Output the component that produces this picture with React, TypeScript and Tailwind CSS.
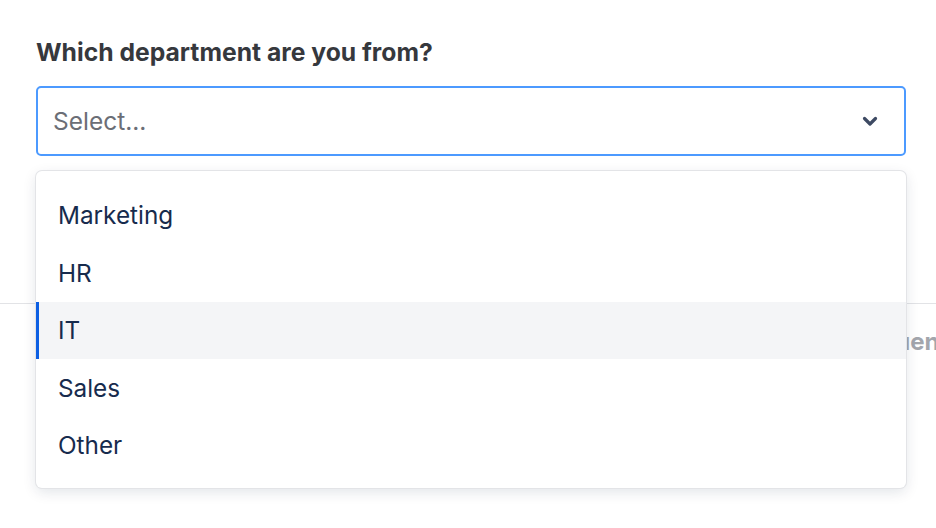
import React from 'react';

const departments = ['Marketing', 'HR', 'IT', 'Sales', 'Other'];

function ChevronDown() {
    return (
        <svg width="24" height="24" viewBox="0 0 24 24" fill="none" className="text-[#3d4a63]">
            <path d="M6.5 9.5l5.5 5.5 5.5-5.5" stroke="currentColor" strokeWidth="3.2" strokeLinecap="round" strokeLinejoin="round" />
        </svg>
    );
}

export default function App() {
    const active = 'IT';

    return (
        <div className="relative w-[936px] h-[528px] overflow-hidden bg-white font-['Inter',sans-serif]">
            <div className="px-[36px] pt-[37px]">
                <label className="block text-[24.7px] leading-[31px] font-bold text-[#36383d]">
                    Which department are you from?
                </label>

                <div className="relative mt-[18px]">
                    {/* Trigger */}
                    <button className="flex h-[70px] w-[870px] items-center justify-between rounded-[5px] border-2 border-[#4c9aff] bg-white pl-[15px] pr-[22px] text-left">
                        <span className="text-[24.5px] text-[#6b6e76]">Select...</span>
                        <ChevronDown />
                    </button>

                    {/* Open menu */}
                    <div className="absolute left-0 top-[85px] z-10 w-[870px] rounded-[6px] bg-white pt-[16px] pb-[14px] shadow-[0_0_0_1px_#e3e4e7,0_4px_14px_rgba(9,30,66,0.12)]">
                        {departments.map((d) => (
                            <div
                                key={d}
                                className={
                                    d === active
                                        ? 'flex h-[57.4px] items-center border-l-[3px] border-[#0c5fe3] bg-[#f4f5f7] pl-[19px] text-[24.3px] text-[#172b4d]'
                                        : 'flex h-[57.4px] items-center pl-[22px] text-[24.3px] text-[#172b4d]'
                                }
                            >
                                {d}
                            </div>
                        ))}
                    </div>
                </div>
            </div>

            {/* Page content behind the menu */}
            <div className="mt-[147px] border-t border-[#e2e3e6]">
                <div className="whitespace-nowrap pl-[843px] pt-[20px] text-[24px] font-bold text-[#a3a6ad]">
                    Frequency
                </div>
            </div>
        </div>
    );
}
